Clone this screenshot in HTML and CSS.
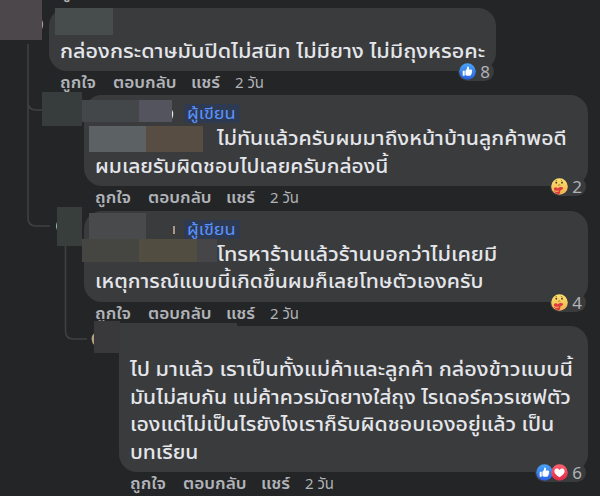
FILE: index.html
```html
<!DOCTYPE html>
<html lang="th">
<head>
<meta charset="utf-8">
<title>ความคิดเห็น</title>
<link rel="stylesheet" href="styles.css">
</head>
<body>
<svg class="defs" width="0" height="0" aria-hidden="true">
  <defs>
    <linearGradient id="blue" x2="0" y2="1"><stop stop-color="#4aa5f8"/><stop offset="1" stop-color="#2860df"/></linearGradient>
    <linearGradient id="red" x2="0" y2="1"><stop stop-color="#fb6270"/><stop offset="1" stop-color="#df2947"/></linearGradient>
    <linearGradient id="yellow" x2="0" y2="1"><stop stop-color="#ffe36d"/><stop offset="1" stop-color="#efb050"/></linearGradient>
    <symbol id="like" viewBox="0 0 17 17">
      <circle cx="8.5" cy="8.5" r="8.3" fill="url(#blue)"/>
      <path fill="#fff" d="M3.7 7.7h2v5h-2zM6.4 7.8l1.5-1.7.5-2.5c1.4-.2 1.9.9 1.6 2l-.3 1h2.2c1.3 0 1.6 1.1.9 1.7.6.6.3 1.3-.2 1.6.3.7 0 1.2-.5 1.4.2 1-.4 1.4-1.3 1.4H8.400c-.9 0-1.400-.3-2-.7z"/>
    </symbol>
    <symbol id="love" viewBox="0 0 17 17">
      <circle cx="8.5" cy="8.5" r="8.3" fill="url(#red)"/>
      <path fill="#fff" d="M8.5 13.3C2.8 9.6 3.1 7.3 3.7 6c.9-1.9 3.8-1.9 4.8.2 1-2.1 3.9-2.1 4.8-.2.6 1.3.9 3.6-4.8 7.3z"/>
    </symbol>
    <symbol id="care" viewBox="0 0 17 17">
      <circle cx="8.5" cy="8.5" r="8.3" fill="url(#yellow)"/>
      <path d="M4.400 3l1.600-.7M9.800 2.300l1.600.7M7 7.300q1.200-.9 2.400 0" fill="none" stroke="#8e5d20" stroke-width=".7"/>
      <circle cx="5.300" cy="4.700" r=".9" fill="#40332c"/><circle cx="11" cy="4.700" r=".9" fill="#40332c"/>
      <path d="M3 10.300c1.100-1.600 2.800-1.300 3.500.2 1.500-1.700 4.300-2 5.500-.8.500 1-1 1.900-2.400 2.500l-1.100 4c-3.600.1-6-2.300-5.500-5.900z" fill="#df3942"/>
      <path d="M3 11.800c1.600 1.100 2.900 1 4.600.7.700.1.500.8-.1 1l-1.900.4c-1.500 0-2.600-1-2.600-2.100z" fill="#f3b34a"/>
    </symbol>
  </defs>
</svg>
<main class="thread">
  <div class="actions previous"><b>ถูกใจ</b></div>

  <article class="comment first">
    <div class="bubble">
      <div class="author"></div>
      <p class="l1">กล่องกระดาษมันปิดไม่สนิท ไม่มียาง ไม่มีถุงหรอคะ</p>
      <div class="reactions"><svg><use href="#like"/></svg><span>8</span></div>
    </div>
    <div class="actions"><b>ถูกใจ</b><b>ตอบกลับ</b><b>แชร์</b><span>2 วัน</span></div>
  </article>

  <article class="comment reply">
    <div class="bubble">
      <div class="author"><span class="badge"><span>ผู้เขียน</span></span></div>
      <p class="l2 mention">ไม่ทันแล้วครับผมมาถึงหน้าบ้านลูกค้าพอดี</p>
      <p class="l3">ผมเลยรับผิดชอบไปเลยครับกล่องนี้</p>
      <div class="reactions"><svg><use href="#care"/></svg><span>2</span></div>
    </div>
    <div class="actions"><b>ถูกใจ</b><b>ตอบกลับ</b><b>แชร์</b><span>2 วัน</span></div>
  </article>

  <article class="comment reply">
    <div class="bubble">
      <div class="author"><span class="badge"><span>ผู้เขียน</span></span></div>
      <p class="l4 mention">โทรหาร้านแล้วร้านบอกว่าไม่เคยมี</p>
      <p class="l5">เหตุการณ์แบบนี้เกิดขึ้นผมก็เลยโทษตัวเองครับ</p>
      <div class="reactions"><svg><use href="#care"/></svg><span>4</span></div>
    </div>
    <div class="actions"><b>ถูกใจ</b><b>ตอบกลับ</b><b>แชร์</b><span>2 วัน</span></div>
  </article>

  <article class="comment nested">
    <div class="bubble">
      <div class="author"></div>
      <p class="l6">ไป มาแล้ว เราเป็นทั้งแม่ค้าและลูกค้า กล่องข้าวแบบนี้</p>
      <p class="l7">มันไม่สบกัน แม่ค้าควรมัดยางใส่ถุง ไรเดอร์ควรเซฟตัว</p>
      <p class="l8">เองแต่ไม่เป็นไรยังไงเราก็รับผิดชอบเองอยู่แล้ว เป็น</p>
      <p class="l9">บทเรียน</p>
      <div class="reactions"><svg><use href="#like"/></svg><svg class="over"><use href="#love"/></svg><span>6</span></div>
    </div>
    <div class="actions"><b>ถูกใจ</b><b>ตอบกลับ</b><b>แชร์</b><span>2 วัน</span></div>
  </article>

  <svg class="overlay" viewBox="0 0 600 496" aria-hidden="true">
    <g fill="none" stroke="#3e4042" stroke-width="1.6">
      <path d="M28 44V218q0 8 8 8H50M28 102q0 8 8 8H42M65.500 246V331q0 8 8 8H87"/>
    </g>
    <path d="M42 20q2.500 4 0 9z" fill="#a89888"/>
    <path d="M171 109q4 3 1 10h-1z" fill="#e4e6eb"/>
    <path d="M57 222q-2 4 0 8z" fill="#95b8ae"/>
    <path d="M174 226v8" stroke="#d4b5a0" stroke-width="1.500"/>
    <path d="M95 332q-7 7 0 14z" fill="#b5a083"/>
    <g shape-rendering="crispEdges">
      <path fill="#4b474b" d="M0 0h42v40H0z"/>
      <path fill="#474c4d" d="M55 8h58v27H55z"/>
      <path fill="#363d3c" d="M42 92h40v34H42z"/>
      <path fill="#444749" d="M82 100h57v22H82z"/>
      <path fill="#53545e" d="M139 100h33v22h-33z"/>
      <path fill="#5c6163" d="M89 126h57v26H89z"/>
      <path fill="#574d43" d="M146 126h57v26h-57z"/>
      <path fill="#373e3c" d="M57 207h25v39H57z"/>
      <path fill="#494a4c" d="M89 213h57v26H89z"/>
      <path fill="#454542" d="M82 239h57v23H82z"/>
      <path fill="#514d40" d="M139 239h58v23h-58z"/>
      <path fill="#464648" d="M197 239h20v23h-20z"/>
      <path fill="#39393b" d="M94 321h26v32H94z"/>
      <path fill="#3a3b3c" d="M120 323h117v30H120z"/>
    </g>
  </svg>
</main>
</body>
</html>
```
FILE: styles.css
```css
* { box-sizing: border-box; }
body {
  margin: 0;
  background: #242526;
  color: #e4e6eb;
  font-family: "Noto Sans", "Noto Sans Thai", "DejaVu Sans", sans-serif;
}
.defs { display: block; height: 0; }
.thread {
  position: relative;
  width: 600px;
  height: 496px;
  overflow: hidden;
}
.overlay {
  position: absolute;
  inset: 0;
  width: 600px;
  height: 496px;
}
.comment { display: flow-root; }
.first { margin-left: 49px; width: 447px; height: 87px; }
.reply { margin-left: 84px; width: 504px; height: 115.500px; }
.nested { margin-left: 119px; width: 469px; }
.bubble {
  position: relative;
  background: #3a3b3c;
  border-radius: 18px;
  padding: 4px 11px 0;
}
.first .bubble { height: 63px; }
.reply .bubble { height: 91px; }
.nested .bubble { height: 146px; }
.author { height: 25px; padding: 5px 0 0 89px; }
.badge {
  display: block;
  width: 56px;
  height: 19px;
  padding-left: 3px;
  border-radius: 3px;
  background: #2d3a52;
  color: #5a92ff;
  font-size: 16.500px;
  line-height: 18px;
  white-space: nowrap;
}
.badge span {
  display: inline-block;
  transform: scaleX(1.1);
  transform-origin: left;
}
p {
  width: max-content;
  margin: 0;
  height: 27.700px;
  font-size: 20px;
  font-weight: 500;
  line-height: 27.700px;
  white-space: nowrap;
  transform-origin: 0 0;
}
.mention { margin-left: 122px; }
.l1 { transform: scaleX(1.079); }
.l2 { transform: scaleX(1.062); }
.l3 { transform: scaleX(1.049); }
.l4 { transform: scaleX(1.080); }
.l5 { transform: scaleX(1.056); }
.l6 { transform: scaleX(1.080); }
.l7 { transform: scaleX(1.052); }
.l8 { transform: scaleX(1.064); }
.l9 { transform: scaleX(1.050); }
.actions {
  display: grid;
  grid-template-columns: 53px 78px 44px 40px;
  height: 24px;
  padding-left: 11px;
  color: #b0b3b8;
  font-size: 15px;
  line-height: 22px;
  white-space: nowrap;
}
.actions b {
  justify-self: start;
  font-weight: 600;
  transform: scaleX(1.15);
  transform-origin: left;
}
.previous { height: 8px; margin-left: 49px; align-content: end; }
.previous b { margin-bottom: 5px; }
.reactions {
  position: absolute;
  right: 2px;
  bottom: -10px;
  display: flex;
  align-items: center;
  height: 19px;
  padding: 0 4px 0 1px;
  border-radius: 10px;
  background: #3a3b3c;
  color: #b0b3b8;
  font-size: 17px;
  line-height: 19px;
}
.reactions svg { display: block; width: 17px; height: 17px; }
.reactions .over { margin-left: -2px; }
.reactions span { margin-left: 4px; }
```
